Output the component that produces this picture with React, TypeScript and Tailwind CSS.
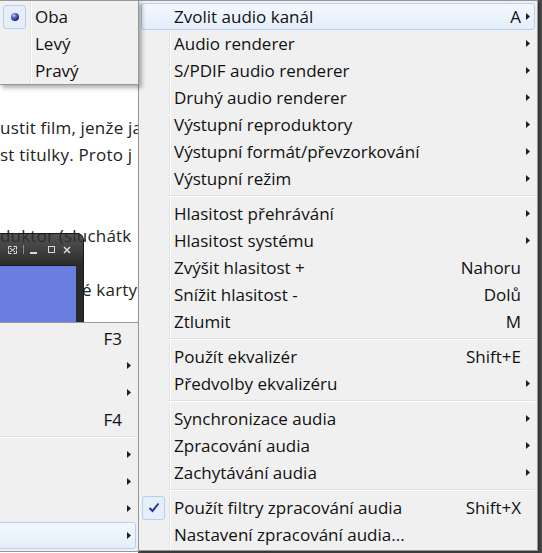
import React from 'react';

type Entry =
  | { sep: true }
  | {
      sep?: false;
      label?: string;
      shortcut?: string;
      sub?: boolean;
      hot?: boolean;
      icon?: 'radio' | 'check';
    };

const channelMenu: Entry[] = [
  { label: 'Oba', icon: 'radio' },
  { label: 'Levý' },
  { label: 'Pravý' },
];

const audioMenu: Entry[] = [
  { label: 'Zvolit audio kanál', shortcut: 'A', sub: true, hot: true },
  { label: 'Audio renderer', sub: true },
  { label: 'S/PDIF audio renderer', sub: true },
  { label: 'Druhý audio renderer', sub: true },
  { label: 'Výstupní reproduktory', sub: true },
  { label: 'Výstupní formát/převzorkování', sub: true },
  { label: 'Výstupní režim', sub: true },
  { sep: true },
  { label: 'Hlasitost přehrávání', sub: true },
  { label: 'Hlasitost systému', sub: true },
  { label: 'Zvýšit hlasitost +', shortcut: 'Nahoru' },
  { label: 'Snížit hlasitost -', shortcut: 'Dolů' },
  { label: 'Ztlumit', shortcut: 'M' },
  { sep: true },
  { label: 'Použít ekvalizér', shortcut: 'Shift+E' },
  { label: 'Předvolby ekvalizéru', sub: true },
  { sep: true },
  { label: 'Synchronizace audia', sub: true },
  { label: 'Zpracování audia', sub: true },
  { label: 'Zachytávání audia', sub: true },
  { sep: true },
  { label: 'Použít filtry zpracování audia', shortcut: 'Shift+X', icon: 'check' },
  { label: 'Nastavení zpracování audia...' },
];

// parent menu, only its right end is visible
const playerMenu: Entry[] = [
  { shortcut: 'F3' },
  { sub: true },
  { sub: true },
  { shortcut: 'F4' },
  { sep: true },
  { sub: true },
  { sub: true },
  { sub: true },
  { sub: true, hot: true },
];

const Arrow = () => (
  <svg width="4" height="7" viewBox="0 0 4 7" className="block">
    <polygon points="0,0 4,3.5 0,7" fill="#1e1e1e" />
  </svg>
);

const RadioDot = () => (
  <svg width="10" height="10" viewBox="0 0 10 10" className="block">
    <defs>
      <radialGradient id="dot" cx="35%" cy="30%" r="70%">
        <stop offset="0%" stopColor="#c9ccf5" />
        <stop offset="45%" stopColor="#5a5fc4" />
        <stop offset="100%" stopColor="#23257a" />
      </radialGradient>
    </defs>
    <circle cx="5" cy="5" r="4" fill="url(#dot)" />
  </svg>
);

const Tick = () => (
  <svg width="12" height="11" viewBox="0 0 12 11" className="block">
    <path d="M1.5 6 L4.5 9 L10.5 1.5" fill="none" stroke="#1c3597" strokeWidth="2" />
  </svg>
);

const Row: React.FC<{ e: Exclude<Entry, { sep: true }>; gutter: boolean }> = ({ e, gutter }) => (
  <div
    className={`flex h-[27px] items-center rounded-[3px] border ${
      e.hot ? 'border-[#b4d0f2] bg-gradient-to-b from-[#f3f8fe] to-[#e4eefa]' : 'border-transparent'
    }`}
  >
    {gutter && (
      <div className="flex h-full w-[27px] shrink-0 items-center">
        {e.icon && (
          <div className="flex h-[24px] w-[23px] items-center justify-center rounded-[3px] border border-[#b4d0f2] bg-[#e6eefa]">
            {e.icon === 'radio' ? <RadioDot /> : <Tick />}
          </div>
        )}
      </div>
    )}
    <div className="flex-1 whitespace-nowrap pl-[5px]">{e.label}</div>
    <div className="whitespace-nowrap">{e.shortcut}</div>
    <div className="flex w-[13px] shrink-0 justify-start pl-[5px]">{e.sub && <Arrow />}</div>
  </div>
);

const Menu: React.FC<{ items: Entry[]; gutter?: boolean; className: string }> = ({
  items,
  gutter = true,
  className,
}) => (
  <div className={`absolute border border-[#979797] bg-[#f0f0f0] p-[2px] ${className}`}>
    {gutter && (
      <div className="absolute bottom-0 left-[30px] top-0 flex">
        <div className="w-px bg-[#e2e3e3]" />
        <div className="w-px bg-white" />
      </div>
    )}
    <div className="relative">
      {items.map((e, i) =>
        e.sep ? (
          <div key={i} className={`flex h-[8px] flex-col justify-center ${gutter ? 'pl-[28px]' : ''}`}>
            <div className="h-px bg-[#e0e0e0]" />
            <div className="h-px bg-white" />
          </div>
        ) : (
          <Row key={i} e={e} gutter={gutter} />
        ),
      )}
    </div>
  </div>
);

const PlayerWindow = () => (
  <div className="absolute left-0 top-[233px] h-[100px] w-[84px] overflow-hidden rounded-tr-[7px] border-r border-t border-[#1a1a1a] bg-[#2c2c2c]/80">
    <div className="flex h-[31px] items-center bg-gradient-to-b from-[#3a3a3a]/10 via-[#333]/60 to-[#2a2a2a] pl-[8px] text-[#dcdcdc]">
      <svg width="9" height="8" viewBox="0 0 9 8" className="block">
        <path d="M0.5 0.5h3M0.5 0.5v3M8.5 0.5h-3M8.5 0.5v3M0.5 7.5h3M0.5 7.5v-3M8.5 7.5h-3M8.5 7.5v-3M2 2l5 4M7 2l-5 4" stroke="currentColor" strokeWidth="1" fill="none" />
      </svg>
      <div className="ml-[6px] h-[9px] w-px bg-[#8a8a8a]" />
      <div className="ml-[6px] mt-[6px] h-[2px] w-[7px] bg-current" />
      <div className="ml-[11px] h-[7px] w-[7px] border-[1.5px] border-current" />
      <svg width="8" height="8" viewBox="0 0 8 8" className="ml-[8px] block">
        <path d="M1 1L7 7M7 1L1 7" stroke="currentColor" strokeWidth="1.5" />
      </svg>
    </div>
    <div className="flex h-full">
      <div className="h-full w-[76px] border-t border-[#1a1a1a] bg-[#6a7ee0]" />
      <div className="h-full flex-1 bg-[#2a2a2a]" />
    </div>
  </div>
);

export default function App() {
  return (
    <div
      className="relative h-[553px] w-[542px] overflow-hidden bg-[#4d4d4d] text-[17px] text-[#111]"
      style={{ fontFamily: '"Open Sans", "Noto Sans", sans-serif' }}
    >
      {/* web page behind the menus */}
      <div className="h-full w-[138px] overflow-hidden whitespace-nowrap bg-white pt-[114px] leading-[27px] tracking-[0.2px] text-[#222]">
        <div>ustit film, jenže ja</div>
        <div>st titulky. Proto j</div>
        <div className="h-[54px]" />
        <div>duktor (sluchátk</div>
        <div className="h-[27px]" />
        <div className="pl-[82px]">é karty</div>
      </div>

      <PlayerWindow />

      <Menu items={playerMenu} gutter={false} className="left-[-200px] top-[322px] w-[339px]" />
      <Menu items={audioMenu} className="left-[138px] top-0 w-[400px] shadow-[2px_2px_3px_rgba(0,0,0,0.35)]" />
      <Menu items={channelMenu} className="left-[-1px] top-0 w-[140px] pb-0 shadow-[3px_3px_4px_rgba(0,0,0,0.3)]" />
    </div>
  );
}
